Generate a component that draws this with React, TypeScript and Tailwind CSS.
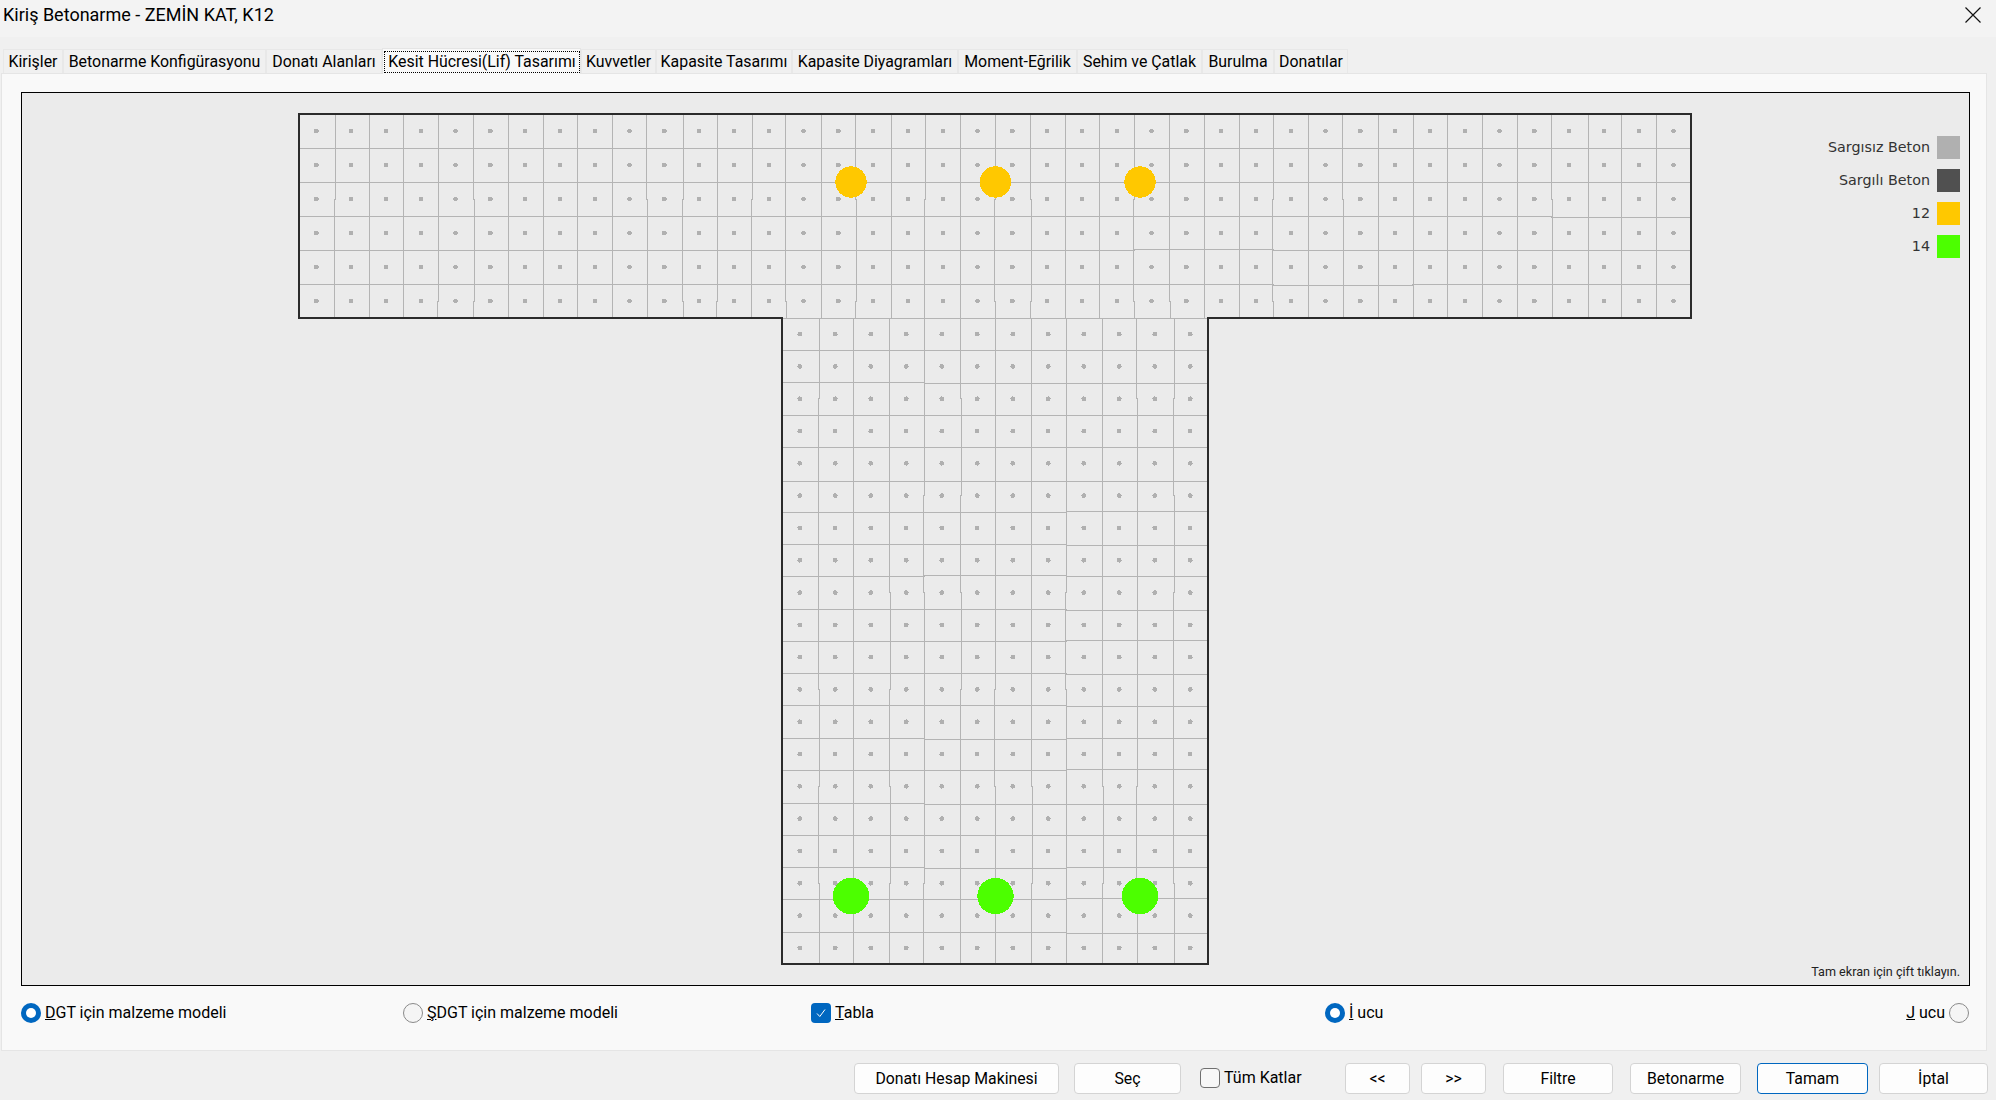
const sekmeler = [
  { ad: 'Kirişler', w: 'w-[60px]' },
  { ad: 'Betonarme Konfigürasyonu', w: 'w-[203px]' },
  { ad: 'Donatı Alanları', w: 'w-[116px]' },
  { ad: 'Kesit Hücresi(Lif) Tasarımı', w: 'w-[199px]', aktif: true },
  { ad: 'Kuvvetler', w: 'w-[75px]' },
  { ad: 'Kapasite Tasarımı', w: 'w-[136px]' },
  { ad: 'Kapasite Diyagramları', w: 'w-[166px]' },
  { ad: 'Moment-Eğrilik', w: 'w-[119px]' },
  { ad: 'Sehim ve Çatlak', w: 'w-[125px]' },
  { ad: 'Burulma', w: 'w-[72px]' },
  { ad: 'Donatılar', w: 'w-[74px]' },
];

const lejant = [
  { ad: 'Sargısız Beton', renk: 'bg-[#b0b0b0]' },
  { ad: 'Sargılı Beton', renk: 'bg-[#505050]' },
  { ad: '12', renk: 'bg-[#ffc800]' },
  { ad: '14', renk: 'bg-[#4cff00]' },
];

// kesit geometrisi, sayfa koordinatlarinda
const TABLA = { x: 299, y: 114, sag: 1691, alt: 318, kolon: 40, satir: 6 };
const GOVDE = { x: 782, y: 318, sag: 1208, alt: 964, kolon: 12, satir: 20 };

// her seferinde ayni cizimi veren kucuk sapma, bir cizgide tek yone 1px
function sapma(a: number, b: number, esik: number) {
  const h = Math.sin(a * 12.9898 + b * 78.233) * 43758.5453;
  const r = h - Math.floor(h);
  if (r < esik) return 0;
  return a % 2 ? 1 : -1;
}

function izgara(b: typeof TABLA, yatayEsik: number) {
  const dx = (b.sag - b.x) / b.kolon;
  const dy = (b.alt - b.y) / b.satir;
  const cizgiler: string[] = [];
  for (let i = 1; i < b.kolon; i++) {
    const x = Math.round(b.x + i * dx);
    const p: string[] = [];
    // sapma birkac satir boyunca surer, kirilma hucre ortasinda olur
    for (let j = 0; j < b.satir; j++) {
      const s = x + sapma(i, Math.floor(j / 3), 0.8) + 0.5;
      p.push(`${s},${b.y + (j ? (j - 0.5) * dy : 0)}`, `${s},${b.y + (j + 0.5) * dy}`);
    }
    const son = x + sapma(i, Math.floor(b.satir / 3), 0.8) + 0.5;
    p.push(`${son},${b.y + (b.satir - 0.5) * dy}`, `${son},${b.alt}`);
    cizgiler.push(p.join(' '));
  }
  for (let j = 1; j < b.satir; j++) {
    const y = Math.round(b.y + j * dy);
    const p: string[] = [];
    for (let i = 0; i < b.kolon; i++) {
      const s = y + sapma(j + 50, Math.floor(i / 4), yatayEsik) + 0.5;
      p.push(`${b.x + i * dx},${s}`, `${b.x + (i + 1) * dx},${s}`);
    }
    cizgiler.push(p.join(' '));
  }
  return cizgiler;
}

function noktalar(b: typeof TABLA) {
  const dx = (b.sag - b.x) / b.kolon;
  const dy = (b.alt - b.y) / b.satir;
  const liste: { x: number; y: number }[] = [];
  for (let i = 0; i < b.kolon; i++) {
    for (let j = 0; j < b.satir; j++) {
      liste.push({ x: b.x + (i + 0.5) * dx, y: b.y + (j + 0.5) * dy });
    }
  }
  return liste;
}

function KesitCizimi() {
  const cizgiler = [...izgara(TABLA, 0.92), ...izgara(GOVDE, 0.6)];
  const hepsi = [...noktalar(TABLA), ...noktalar(GOVDE)];
  return (
    <svg width={1397} height={854} viewBox="297 112 1397 854" shapeRendering="crispEdges" className="block">
      {cizgiler.map((c, i) => (
        <polyline key={i} points={c} fill="none" stroke="#b4b4b4" strokeWidth={1} />
      ))}
      <path d={`M${GOVDE.x} 318.5H${GOVDE.sag}`} stroke="#b4b4b4" strokeWidth={1} />
      {hepsi.map((n, i) => (
        <circle key={i} cx={n.x} cy={n.y} r={2.4} fill="#b0b0b0" />
      ))}
      <path
        d="M299 114H1691V318H1208V964H782V318H299Z"
        fill="none"
        stroke="#2b2b2b"
        strokeWidth={2}
      />
      {[851, 995.5, 1140].map((x) => (
        <circle key={x} cx={x} cy={182} r={15.7} fill="#ffc800" />
      ))}
      {[851, 995.5, 1140].map((x) => (
        <circle key={x} cx={x} cy={896} r={18.2} fill="#4cff00" />
      ))}
    </svg>
  );
}

function Radyo({ secili }: { secili?: boolean }) {
  if (secili) {
    return (
      <span className="flex h-5 w-5 shrink-0 items-center justify-center rounded-full bg-[#0067c0]">
        <span className="h-[10px] w-[10px] rounded-full bg-white" />
      </span>
    );
  }
  return <span className="h-5 w-5 shrink-0 rounded-full border border-[#8a8a8a] bg-[#f5f5f5]" />;
}

function Dugme({ w, vurgulu, children }: { w: string; vurgulu?: boolean; children: React.ReactNode }) {
  return (
    <button
      className={`flex h-[31px] items-center justify-center rounded-[4px] border bg-[#fdfdfd] pt-px text-[15.8px] text-black ${w} ${
        vurgulu ? 'border-[#0067c0]' : 'border-[#d4d4d4]'
      }`}
    >
      {children}
    </button>
  );
}

export default function App() {
  return (
    <div className="flex h-[1100px] w-[1996px] flex-col overflow-hidden bg-[#f0f0f0] font-['Roboto',sans-serif] text-[16px] text-black">
      {/* Baslik */}
      <div className="flex h-[37px] shrink-0 items-center justify-between bg-[#f3f3f3] pb-[8px] pl-[3px] pr-[15px]">
        <span className="text-[18px]">Kiriş Betonarme - ZEMİN KAT, K12</span>
        <svg className="h-4 w-4" viewBox="0 0 16 16" fill="none" stroke="#111" strokeWidth={1.2}>
          <path d="M0.5 0.5l15 15M15.5 0.5l-15 15" />
        </svg>
      </div>

      {/* Sekmeler */}
      <div className="flex h-[36px] shrink-0 items-end pl-[3px] text-[15.9px]">
        {sekmeler.map((s) =>
          s.aktif ? (
            <div key={s.ad} className={`relative z-10 -mb-px flex h-[26px] items-center border border-b-0 border-[#e5e5e5] bg-[#f9f9f9] pl-px pt-px ${s.w}`}>
              <span className="flex h-[22px] w-[196px] items-center justify-center border border-dotted border-black whitespace-nowrap">{s.ad}</span>
            </div>
          ) : (
            <div key={s.ad} className={`flex h-[24px] items-center justify-center border border-b-0 border-[#e8e8e8] bg-[#f0f0f0] whitespace-nowrap ${s.w}`}>
              {s.ad}
            </div>
          ),
        )}
      </div>

      {/* Ana panel */}
      <div className="ml-px flex h-[978px] w-[1986px] shrink-0 flex-col border border-[#e5e5e5] bg-[#f9f9f9] pl-[19px] pt-[18px]">
        <div className="relative flex h-[894px] w-[1949px] shrink-0 justify-center border border-black bg-[#ebebeb] pt-[19px]">
          <KesitCizimi />
          <div className="absolute right-[9px] top-[43px] flex flex-col gap-[10px] font-['DejaVu_Sans',sans-serif] text-[14.3px] text-[#333]">
            {lejant.map((l) => (
              <div key={l.ad} className="flex items-center justify-end gap-[7px]">
                <span className="pt-px">{l.ad}</span>
                <span className={`h-[23px] w-[23px] ${l.renk}`} />
              </div>
            ))}
          </div>
          <span className="absolute bottom-[3px] right-[9px] text-[12.6px] text-[#222]">Tam ekran için çift tıklayın.</span>
        </div>

        <div className="flex h-[52px] items-center pr-[17px] pt-[2px]">
          <label className="flex w-[382px] items-center gap-[4px]">
            <Radyo secili />
            <span><u>D</u>GT için malzeme modeli</span>
          </label>
          <label className="flex w-[408px] items-center gap-[4px]">
            <Radyo />
            <span><u>Ş</u>DGT için malzeme modeli</span>
          </label>
          <label className="flex w-[514px] items-center gap-[4px]">
            <span className="flex h-5 w-5 items-center justify-center rounded-[4px] bg-[#0067c0]">
              <svg className="h-3 w-3" viewBox="0 0 12 12" fill="none" stroke="#fff" strokeWidth={1}>
                <path d="M2 6.5l2.8 3L10 2.5" />
              </svg>
            </span>
            <span><u>T</u>abla</span>
          </label>
          <label className="flex items-center gap-[4px]">
            <Radyo secili />
            <span><u>İ</u> ucu</span>
          </label>
          <label className="ml-auto flex items-center gap-[4px]">
            <span><u>J</u> ucu</span>
            <Radyo />
          </label>
        </div>
      </div>

      {/* Alt dugmeler */}
      <div className="mt-[12px] flex items-center justify-end pr-[8px]">
        <Dugme w="w-[205px]">Donatı Hesap Makinesi</Dugme>
        <div className="ml-[15px]"><Dugme w="w-[107px]">Seç</Dugme></div>
        <label className="ml-[19px] flex w-[102px] items-center gap-[4px] pb-[2px]">
          <span className="h-5 w-5 rounded-[4px] border border-[#707070] bg-[#f7f7f7]" />
          <span className="whitespace-nowrap">Tüm Katlar</span>
        </label>
        <div className="ml-[43px]"><Dugme w="w-[65px]">&lt;&lt;</Dugme></div>
        <div className="ml-[11px]"><Dugme w="w-[65px]">&gt;&gt;</Dugme></div>
        <div className="ml-[17px]"><Dugme w="w-[110px]">Filtre</Dugme></div>
        <div className="ml-[17px]"><Dugme w="w-[111px]">Betonarme</Dugme></div>
        <div className="ml-[16px]"><Dugme w="w-[111px]" vurgulu>Tamam</Dugme></div>
        <div className="ml-[11px]"><Dugme w="w-[109px]">İptal</Dugme></div>
      </div>
    </div>
  );
}
